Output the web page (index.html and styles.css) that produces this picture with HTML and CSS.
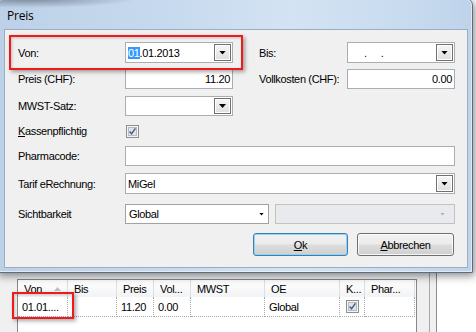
FILE: index.html
```html
<!DOCTYPE html>
<html lang="de">
<head>
<meta charset="UTF-8">
<title>Preis</title>
<link rel="stylesheet" href="styles.css">
</head>
<body>
<div class="desktop">

	<!-- Fenster im Hintergrund mit der Preisliste -->
	<div class="backwin">
		<div class="panel">
			<div class="list">
				<div class="list-head">
					<div class="hcell">Von<svg class="sort" width="7" height="4" viewBox="0 0 7 4"><path d="M0 4h7L3.5 0z" fill="#b6c0cc"/></svg></div>
					<div class="hcell">Bis</div>
					<div class="hcell">Preis</div>
					<div class="hcell">Vol...</div>
					<div class="hcell">MWST</div>
					<div class="hcell">OE</div>
					<div class="hcell">K...</div>
					<div class="hcell">Phar...</div>
				</div>
				<div class="list-row">
					<div class="cell">01.01....</div>
					<div class="cell"></div>
					<div class="cell">11.20</div>
					<div class="cell">0.00</div>
					<div class="cell"></div>
					<div class="cell">Global</div>
					<div class="cell"><svg class="cbx" width="13" height="13" viewBox="0 0 13 13"><rect x="0.5" y="0.5" width="12" height="12" fill="#f4f4f4" stroke="#8f8f8f"/><rect x="2.5" y="2.5" width="8" height="8" fill="#dfe3ea" stroke="#b7bcc4"/><path d="M3.6 6.4l2 2.4 3.8-5.4" fill="none" stroke="#4d6185" stroke-width="1.5"/></svg></div>
					<div class="cell"></div>
				</div>
			</div>
		</div>
	</div>

	<!-- Dialog -->
	<div class="dialog">
		<div class="caption">Preis</div>
		<div class="client">
			<div class="form">
				<div class="row row-dates">
					<span class="lbl">Von:</span>
					<div class="combo"><span class="val"><span class="sel">01</span>.01.2013</span><span class="ddbtn"></span></div>
					<span class="lbl col4">Bis:</span>
					<div class="combo col5"><span class="val"><span class="blank">.</span><span class="blank">.</span></span><span class="ddbtn"></span></div>
				</div>
				<div class="row row-price">
					<span class="lbl">Preis (CHF):</span>
					<div class="tb">11.20</div>
					<span class="lbl col4">Vollkosten (CHF):</span>
					<div class="tb col5">0.00</div>
				</div>
				<div class="row row-vat">
					<span class="lbl">MWST-Satz:</span>
					<div class="combo"><span class="val"></span><span class="ddbtn"></span></div>
				</div>
				<div class="row row-check">
					<span class="lbl"><span class="mn">K</span>assenpflichtig</span>
					<div class="checkcell"><svg class="cbx" width="13" height="13" viewBox="0 0 13 13"><rect x="0.5" y="0.5" width="12" height="12" fill="#f4f4f4" stroke="#8f8f8f"/><rect x="2.5" y="2.5" width="8" height="8" fill="#dfe3ea" stroke="#b7bcc4"/><path d="M3.6 6.4l2 2.4 3.8-5.4" fill="none" stroke="#4d6185" stroke-width="1.5"/></svg></div>
				</div>
				<div class="row row-code">
					<span class="lbl">Pharmacode:</span>
					<div class="tb wide"></div>
				</div>
				<div class="row row-tariff">
					<span class="lbl">Tarif eRechnung:</span>
					<div class="combo wide"><span class="val">MiGel</span><span class="ddbtn"></span></div>
				</div>
				<div class="row row-scope">
					<span class="lbl">Sichtbarkeit</span>
					<div class="scope">
						<div class="flat"><span class="val">Global</span></div>
						<div class="flat disabled"></div>
					</div>
				</div>
				<div class="buttons">
					<button class="btn btn-ok"><span class="mn">O</span>k</button>
					<button class="btn btn-cancel"><span class="mn">A</span>bbrechen</button>
				</div>
			</div>
		</div>
	</div>

	<!-- rote Markierungen -->
	<div class="mark mark-von"></div>
	<div class="mark mark-row"></div>
</div>
</body>
</html>
```

FILE: styles.css
```css
*{
	box-sizing:border-box;
}
html,body{
	margin:0;
}
body{
	width:476px;
	height:332px;
	overflow:hidden;
	background:#fff;
	color:#000;
	font-family:"Liberation Sans",Arial,sans-serif;
	font-size:11px;
	letter-spacing:-0.35px;
}
.desktop{
	position:relative;
	width:476px;
	height:332px;
}

/* Hintergrundfenster */
.backwin{
	display:flex;
	width:437px;
	height:100%;
	background:#f0f0f0;
	border-right:1px solid #8d8d8d;
}
.panel{
	width:430px;
	height:100%;
	border-right:1px solid #a7a7a7;
	padding:279px 0 0 17px;
}
.list{
	width:400px;
	height:100%;
	background:#fff;
	border:1px solid #828790;
	border-bottom:0;
}
.list-head,.list-row{
	display:grid;
	grid-template-columns:50px 49px 37px 37px 74px 75px 25px 50px;
}
.list-head{
	height:17px;
	background:linear-gradient(#fff,#f2f3f5);
}
.hcell{
	display:flex;
	align-items:center;
	padding-left:6px;
	border-right:1px solid #dcdfe4;
	white-space:nowrap;
	overflow:hidden;
}
.sort{
	margin:0 6px 0 auto;
}
.list-row{
	height:20px;
}
.cell{
	display:flex;
	align-items:center;
	padding-left:4px;
	border-right:1px dotted #a9a9a9;
	border-bottom:1px dotted #a9a9a9;
	white-space:nowrap;
}
.cell .cbx{
	margin-left:2px;
}

/* Dialog */
.dialog{
	position:absolute;
	left:-4px;
	top:-2px;
	width:477px;
	padding:0 4px 4px 7px;
	border:1px solid #5d6d80;
	border-radius:7px 7px 0 0;
	background:
		radial-gradient(110px 9px at 30px 0,rgba(70,80,95,.55),rgba(70,80,95,0)),
		linear-gradient(90deg,#bcd1e8 0%,#c7d9ee 35%,#d3e3f3 62%,#c9dbef 85%,#bed3ea 100%);
	box-shadow:inset 0 0 0 1px rgba(255,255,255,.5),2px 3px 9px rgba(0,0,0,.45);
}
.caption{
	height:30px;
	display:flex;
	align-items:center;
	padding:2px 0 0 3px;
	font-family:"Open Sans",sans-serif;
	font-size:12px;
	letter-spacing:-0.2px;
}
.client{
	height:239px;
	background:#f0f0f0;
	border:1px solid #9badc1;
	padding:12px 0 0 13px;
}
.form{
	width:437px;
}
.row{
	display:grid;
	grid-template-columns:107px 108px 26px 88px 108px;
	align-items:center;
	height:20px;
}
.row-dates{height:21px;}
.row-price{margin-top:6px;}
.row-vat{margin-top:7px;}
.row-check{margin-top:8px;height:14px;}
.row-code{margin-top:8px;}
.row-tariff{margin-top:7px;height:21px;}
.row-scope{margin-top:10px;}
.col4{grid-column:4;}
.col5{grid-column:5;}
.wide,.scope{grid-column:2/6;}
.mn{
	text-decoration:underline;
}

/* Felder */
.combo,.tb,.flat{
	height:100%;
	background:#fff;
	border:1px solid #abadb3;
}
.combo{
	display:flex;
	align-items:center;
	padding:1px;
}
.val{
	flex:1;
	padding-left:1px;
	white-space:pre;
}
.sel{
	background:#3399ff;
	color:#fff;
}
.blank{
	margin-left:14px;
}
.ddbtn{
	width:17px;
	align-self:stretch;
	display:flex;
	align-items:center;
	justify-content:center;
	border:1px solid #707070;
	background:linear-gradient(#f6f6f6,#dedede);
	box-shadow:inset 0 0 0 1px #fff;
}
.ddbtn::after{
	content:"";
	width:7px;
	height:4px;
	background:#000;
	clip-path:polygon(0 0,100% 0,50% 100%);
}
.tb{
	display:flex;
	align-items:center;
	justify-content:flex-end;
	padding-right:2px;
}
.checkcell{
	display:flex;
	padding-left:1px;
}
.scope{
	display:flex;
	gap:6px;
	height:100%;
}
.flat{
	width:144px;
	display:flex;
	align-items:center;
	padding:0 4px 0 2px;
	border-color:#a2a2a2;
}
.flat::after{
	content:"";
	width:5px;
	height:3px;
	margin-left:auto;
	background:#000;
	clip-path:polygon(0 0,100% 0,50% 100%);
}
.flat.disabled{
	flex:1;
	background:#e9eaed;
	border-color:#c2c2c2;
	padding-right:9px;
}
.flat.disabled::after{
	background:#b0b0b0;
}

/* Knöpfe */
.buttons{
	display:flex;
	justify-content:flex-end;
	gap:9px;
	margin-top:9px;
	padding-right:1px;
}
.btn{
	height:23px;
	padding:0;
	border:1px solid #707070;
	border-radius:3px;
	background:linear-gradient(#f2f2f2 0,#ebebeb 48%,#dddddd 52%,#cfcfcf 100%);
	box-shadow:inset 0 0 0 1px rgba(255,255,255,.8);
	color:#000;
	font:inherit;
	letter-spacing:inherit;
}
.btn-ok{
	width:95px;
	border-color:#3c7fb1;
	box-shadow:inset 0 0 0 1px #93d3f3;
}
.btn-cancel{
	width:97px;
}

/* Markierungen */
.mark{
	position:absolute;
	border:2px solid #f01a1a;
	box-shadow:2px 2px 4px rgba(0,0,0,.35),inset 1px 1px 3px rgba(0,0,0,.2);
}
.mark-von{
	left:9px;
	top:35px;
	width:234px;
	height:35px;
}
.mark-row{
	left:12px;
	top:292px;
	width:62px;
	height:27px;
}
```
